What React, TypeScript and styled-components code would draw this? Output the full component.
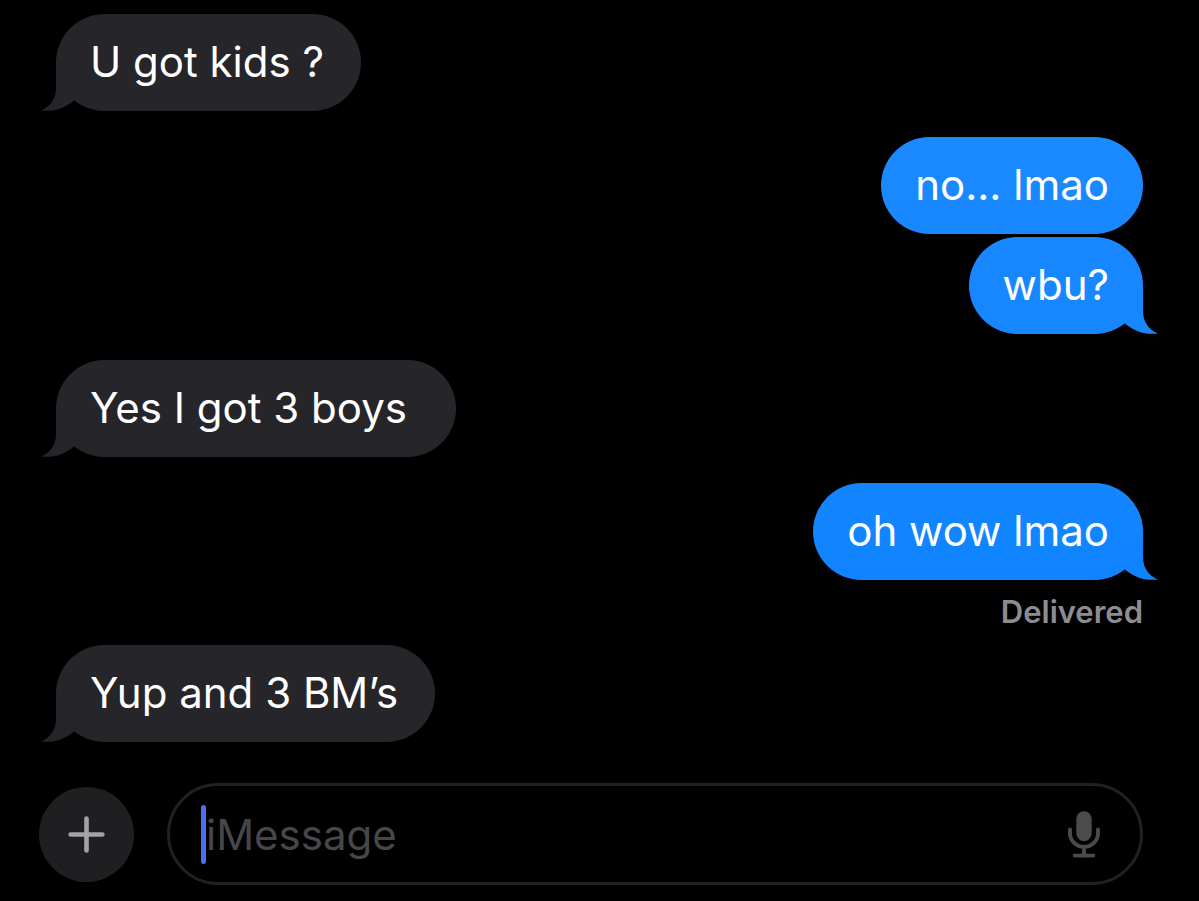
import React from "react";
import styled, { createGlobalStyle, css } from "styled-components";

const GlobalStyle = createGlobalStyle`
  *, *::before, *::after { box-sizing: border-box; }
  body {
    margin: 0;
    background: #000;
    color: #fff;
    font-family: Inter, "Liberation Sans", sans-serif;
  }
`;

type Side = "in" | "out";

const Screen = styled.div`
  display: flex;
  flex-direction: column;
  min-height: 100vh;
  background: #000;
`;

const Thread = styled.main`
  display: flex;
  flex-direction: column;
  padding: 14px 56px 0;
`;

const Group = styled.section<{ $side: Side; $hasStatus: boolean }>`
  display: flex;
  flex-direction: column;
  gap: 3px;
  align-items: ${({ $side }) => ($side === "in" ? "flex-start" : "flex-end")};
  padding-bottom: ${({ $hasStatus }) => ($hasStatus ? "15px" : "26px")};
`;

const Bubble = styled.p<{ $side: Side; $tone: string }>`
  position: relative;
  margin: 0;
  padding: ${({ $side }) => ($side === "in" ? "22px 37px 23px 34px" : "22px 34px 23px")};
  border-radius: 49px;
  font-size: 42px;
  line-height: 52px;
  background: ${({ $tone }) => $tone};
  color: #fff;
`;

const TailShape = styled.svg<{ $side: Side }>`
  position: absolute;
  bottom: 0;
  width: 40px;
  height: 49px;
  ${({ $side }) =>
    $side === "in"
      ? css`
          left: -15px;
        `
      : css`
          right: -15px;
          transform: scaleX(-1);
        `}
`;

const Status = styled.span`
  margin-top: 11px;
  font-size: 31px;
  font-weight: 600;
  line-height: 36px;
  color: #8d8c92;
`;

const Composer = styled.form`
  display: flex;
  align-items: center;
  gap: 33px;
  padding: 15px 56px 16px 39px;
`;

const AddButton = styled.button`
  display: grid;
  place-items: center;
  flex: none;
  width: 95px;
  height: 95px;
  padding: 0;
  border: 0;
  border-radius: 50%;
  background: #1f1f21;
`;

const Field = styled.label`
  display: flex;
  align-items: center;
  flex: 1;
  min-width: 0;
  height: 102px;
  padding: 0 40px 0 31px;
  border: 3px solid #212123;
  border-radius: 52px;
`;

const Caret = styled.span`
  flex: none;
  width: 5px;
  height: 59px;
  border-radius: 3px;
  background: #4a6ff0;
`;

const MessageInput = styled.input`
  flex: 1;
  min-width: 0;
  height: 58px;
  padding: 0;
  border: 0;
  outline: 0;
  background: transparent;
  color: #fff;
  caret-color: transparent;
  font-family: inherit;
  font-size: 42px;

  &::placeholder {
    color: #47474a;
    opacity: 1;
  }
`;

const MicButton = styled.button`
  display: grid;
  flex: none;
  padding: 0;
  border: 0;
  background: transparent;
`;

interface Message {
  text: string;
  tone: string;
  tail: string | null;
}

interface MessageGroup {
  side: Side;
  messages: Message[];
  status?: string;
}

const GRAY = "#26252a";

const groups: MessageGroup[] = [
  { side: "in", messages: [{ text: "U got kids ?", tone: GRAY, tail: GRAY }] },
  {
    side: "out",
    messages: [
      { text: "no... lmao", tone: "linear-gradient(#1b8aff, #1988ff)", tail: null },
      { text: "wbu?", tone: "linear-gradient(#1988ff, #1787ff)", tail: "#1787ff" },
    ],
  },
  { side: "in", messages: [{ text: "Yes I got 3 boys\u00a0", tone: GRAY, tail: GRAY }] },
  {
    side: "out",
    messages: [{ text: "oh wow lmao", tone: "linear-gradient(#1386ff, #1084ff)", tail: "#1084ff" }],
    status: "Delivered",
  },
  { side: "in", messages: [{ text: "Yup and 3 BM’s", tone: GRAY, tail: GRAY }] },
];

function Tail({ side, color }: { side: Side; color: string }) {
  return (
    <TailShape $side={side} viewBox="0 0 40 49" aria-hidden="true">
      <path
        d="M15 0V26C15 37 9 45 0 48.4C12 50 23 47 33 38.5L40 34V20Z"
        fill={color}
      />
    </TailShape>
  );
}

function PlusIcon() {
  return (
    <svg width="37" height="37" viewBox="0 0 37 37" aria-hidden="true">
      <path d="M18.5 2.6V34.4M2.6 18.5H34.4" stroke="#a3a3a6" strokeWidth="4.6" strokeLinecap="round" />
    </svg>
  );
}

function MicIcon() {
  return (
    <svg width="32" height="47" viewBox="0 0 32 47" fill="none" aria-hidden="true">
      <rect x="8.3" y="0.2" width="15.4" height="30" rx="7.7" fill="#4b4b4e" />
      <path
        d="M2 18.5V22.2A14 13.6 0 0 0 30 22.2V18.5M16 36.5V44M6.6 44.6H25.4"
        stroke="#4b4b4e"
        strokeWidth="3.9"
        strokeLinecap="round"
      />
    </svg>
  );
}

export default function App() {
  return (
    <Screen>
      <GlobalStyle />
      <Thread>
        {groups.map((group, i) => (
          <Group key={i} $side={group.side} $hasStatus={Boolean(group.status)}>
            {group.messages.map((message) => (
              <Bubble key={message.text} $side={group.side} $tone={message.tone}>
                {message.tail && <Tail side={group.side} color={message.tail} />}
                {message.text}
              </Bubble>
            ))}
            {group.status && <Status>{group.status}</Status>}
          </Group>
        ))}
      </Thread>
      <Composer onSubmit={(event) => event.preventDefault()}>
        <AddButton type="button" aria-label="Add">
          <PlusIcon />
        </AddButton>
        <Field>
          <Caret />
          <MessageInput type="text" placeholder="iMessage" aria-label="Message" />
          <MicButton type="button" aria-label="Dictate">
            <MicIcon />
          </MicButton>
        </Field>
      </Composer>
    </Screen>
  );
}
